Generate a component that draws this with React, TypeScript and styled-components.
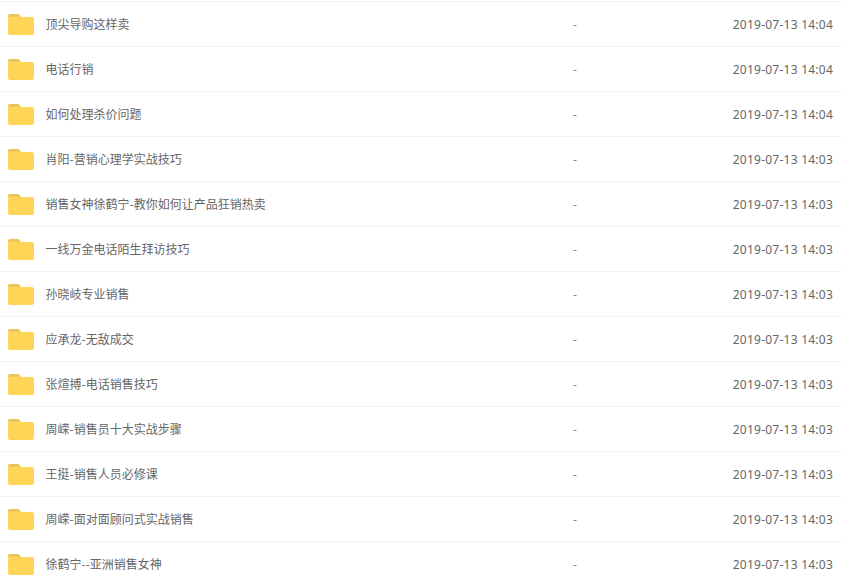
import React from "react";
import styled, { createGlobalStyle } from "styled-components";

const Global = createGlobalStyle`
  html, body { margin: 0; padding: 0; background: #fff; overflow: hidden; }
  body { font-family: "Noto Sans", "Noto Sans CJK SC", sans-serif; }
`;

const List = styled.ul`
  list-style: none;
  margin: 0;
  padding: 1px 0 0;
  height: 584px;
  box-sizing: border-box;
  overflow: hidden;
`;

const Row = styled.li`
  display: grid;
  grid-template-columns: 565px 1fr auto;
  align-items: center;
  height: 45px;
  box-sizing: border-box;
  border-top: 1px solid #f1f3f5;
  padding: 0 10px 0 8px;
  font-size: 12px;
  color: #666;
`;

const NameCell = styled.div`
  display: flex;
  align-items: center;
  gap: 11.5px;
`;

const FolderGlyph = styled.svg`
  display: block;
  width: 26px;
  height: 21px;
  margin-top: 1px;
  flex: none;
`;

const Name = styled.span`
  font-family: "Noto Sans CJK SC", sans-serif;
  color: #666;
  line-height: 18px;
`;

const Size = styled.span`
  color: #888;
`;

const Time = styled.span`
  color: #666;
  font-size: 12px;
  letter-spacing: 0.24px;
`;

const FolderIcon = () => (
  <FolderGlyph viewBox="0 0 26 21" aria-hidden="true">
    <path d="M0 2A2 2 0 0 1 2 0h7.5a2.5 2.5 0 0 1 2 1L13 3H0z" fill="#e8c35c" />
    <path d="M0 4.5A2 2 0 0 1 2 2.5h9.5L13 3h11a2 2 0 0 1 2 2v14a2 2 0 0 1-2 2H2a2 2 0 0 1-2-2z" fill="#ffd558" />
  </FolderGlyph>
);

const items: [string, string][] = [
  ["顶尖导购这样卖", "14:04"],
  ["电话行销", "14:04"],
  ["如何处理杀价问题", "14:04"],
  ["肖阳-营销心理学实战技巧", "14:03"],
  ["销售女神徐鹤宁-教你如何让产品狂销热卖", "14:03"],
  ["一线万金电话陌生拜访技巧", "14:03"],
  ["孙晓岐专业销售", "14:03"],
  ["应承龙-无敌成交", "14:03"],
  ["张煊搏-电话销售技巧", "14:03"],
  ["周嵘-销售员十大实战步骤", "14:03"],
  ["王挺-销售人员必修课", "14:03"],
  ["周嵘-面对面顾问式实战销售", "14:03"],
  ["徐鹤宁--亚洲销售女神", "14:03"],
];

export default function App() {
  return (
    <>
      <Global />
      <List>
        {items.map(([name, time]) => (
          <Row key={name}>
            <NameCell>
              <FolderIcon />
              <Name>{name}</Name>
            </NameCell>
            <Size>-</Size>
            <Time>2019-07-13 {time}</Time>
          </Row>
        ))}
      </List>
    </>
  );
}
